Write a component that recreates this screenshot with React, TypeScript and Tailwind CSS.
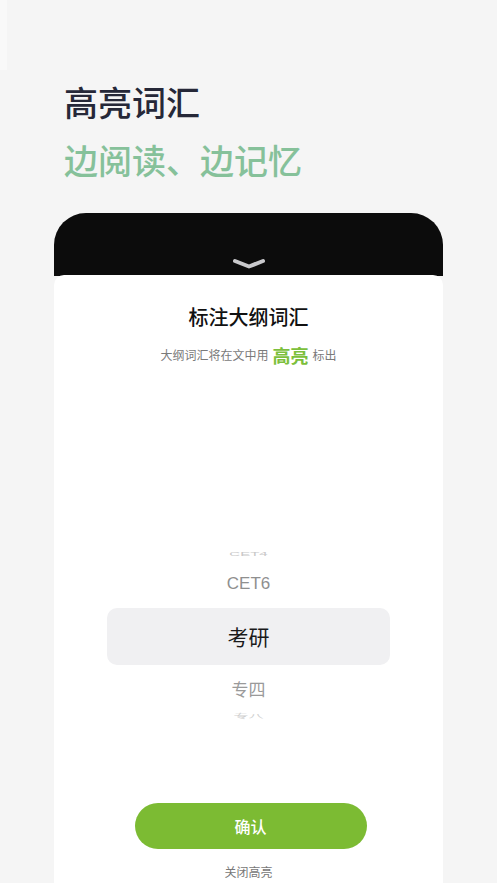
import React from "react";

export default function App() {
  const cjk = { fontFamily: '"Noto Sans CJK SC", "Noto Sans", sans-serif' };
  return (
    <div className="relative w-[497px] h-[883px] overflow-hidden bg-[#f5f5f5]" style={cjk}>
      <div className="absolute left-0 top-0 w-[7px] h-[70px] bg-white/40" />
      <div className="pl-[64px] pt-[82px]">
        <div className="text-[34px] leading-[40px] font-medium text-[#262838]">高亮词汇</div>
        <div className="mt-[18px] text-[34px] leading-[40px] font-medium text-[#86c19a]">边阅读、边记忆</div>
      </div>
      <div className="mx-[54px] mt-[33px] w-[389px]">
        <div className="h-[63px] bg-[#0c0c0c] rounded-t-[32px] flex justify-center items-end pb-[6px]">
          <svg width="34" height="12" viewBox="0 0 34 12">
            <path d="M3 3 L17 8.5 L31 3" fill="none" stroke="#c9c9cc" strokeWidth="4" strokeLinecap="round" strokeLinejoin="round" />
          </svg>
        </div>
        <div className="-mt-[1px] bg-white rounded-t-[10px] h-[700px] flex flex-col items-center">
          <div className="pt-[28px] text-[20px] leading-[28px] font-medium text-[#111]">标注大纲词汇</div>
          <div className="mt-[12px] h-[24px] flex items-center gap-[4px]">
            <span className="text-[12px] text-[#7a7a7a]">大纲词汇将在文中用</span>
            <span className="text-[18px] font-bold text-[#7cbf3c]">高亮</span>
            <span className="text-[12px] text-[#7a7a7a]">标出</span>
          </div>
          <div className="mt-[177px] w-full flex flex-col items-center">
            <div className="h-[20px] flex items-center">
              <span className="text-[15px] text-[#c8c8c8] scale-y-[0.35]" style={{ fontFamily: '"Liberation Sans", sans-serif' }}>CET4</span>
            </div>
            <div className="h-[40px] flex items-center">
              <span className="text-[17px] text-[#8f8f8f]" style={{ fontFamily: '"Liberation Sans", sans-serif' }}>CET6</span>
            </div>
            <div className="mt-[4px] w-[283px] h-[57px] rounded-[10px] bg-[#f0f0f2] flex items-center justify-center">
              <span className="text-[21px] text-[#1a1a1a]">考研</span>
            </div>
            <div className="mt-[4px] h-[40px] flex items-center">
              <span className="text-[17px] text-[#9a9a9a]">专四</span>
            </div>
            <div className="h-[14px] flex items-center overflow-hidden">
              <span className="text-[15px] text-[#cfcfcf] scale-y-[0.35]">专八</span>
            </div>
          </div>
          <button className="mt-[80px] ml-[4px] w-[232px] h-[46px] rounded-full bg-[#7cbb33] text-white text-[16px] font-medium flex items-center justify-center">
            确认
          </button>
          <div className="mt-[15px] text-[12px] leading-[16px] text-[#777]">关闭高亮</div>
        </div>
      </div>
    </div>
  );
}
